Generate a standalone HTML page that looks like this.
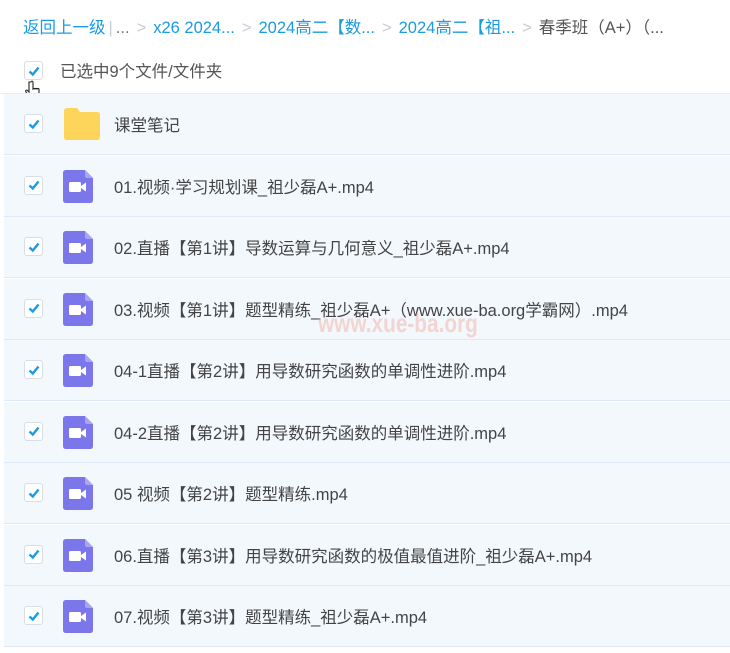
<!DOCTYPE html>
<html><head><meta charset="utf-8"><style>
body{margin:0;width:730px;height:653px;background:#fff;font-family:"Liberation Sans","Noto Sans CJK SC",sans-serif;overflow:hidden;position:relative}
.bc{position:absolute;left:23px;top:14px;font-size:16.5px;color:#1a9be6;white-space:nowrap}
.bc .g{color:#c6ccd6;margin:0 7px}
.bc .d{color:#555}
.cb{position:absolute;width:17px;height:17px;border:1px solid #d8dde6;border-radius:3px;background:#fff}
.cb svg{position:absolute;left:1.5px;top:1.5px}
.sel{position:absolute;left:60px;top:58px;font-size:16.5px;color:#555}
.row{position:absolute;left:4px;width:726px;height:60px;background:#f3f8fd;border-bottom:1.5px solid #dde9f6}
.row .cb{left:20px;top:20px}
.row .t{position:absolute;left:110px;top:18px;font-size:16.5px;color:#444;white-space:nowrap}
.row .ic{position:absolute;left:59px;top:14px}
.wm{position:absolute;left:318px;top:308px;font-size:26px;font-weight:bold;color:rgba(240,150,130,0.35);transform:scaleX(0.8);transform-origin:left top;font-family:"Liberation Sans",sans-serif}
</style></head><body>
<div class="bc">返回上一级<span class="g" style="margin:0 3px">|</span><span style="color:#777">...</span><span class="g">&gt;</span>x26 2024...<span class="g">&gt;</span>2024高二【数...<span class="g">&gt;</span>2024高二【祖...<span class="g">&gt;</span><span class="d">春季班（A+）（...</span></div>
<div class="cb" style="left:24px;top:61px"><svg width="14" height="14"><path d="M2.5 7.5 L5.8 10.5 L11.5 3.5" stroke="#1a9be6" stroke-width="2.4" fill="none"/></svg></div>
<div class="sel">已选中9个文件/文件夹</div>
<svg style="position:absolute;left:23px;top:80px" width="20" height="24"><path d="M6 2 v10 l-2 -2 q-2 0 -1 2 l4 7 h7 l2 -4 v-6 q-1 -1 -2 0 q-1 -1 -2 0 q-1 -1 -2 0 v-7 q-1 -2 -2 0z" fill="#fff" stroke="#222" stroke-width="1.1"/></svg>
<div style="position:absolute;left:0;top:93px;width:730px;height:1px;background:#e6edf5"></div>

<div class="row" style="top:94px"><div class="cb"><svg width="14" height="14"><path d="M2.5 7.5 L5.8 10.5 L11.5 3.5" stroke="#1a9be6" stroke-width="2.4" fill="none"/></svg></div>
<svg class="ic" width="36" height="32" style="left:60px;top:14px"><path d="M0 3 q0-3 3-3 h10 l3 4 h17 q3 0 3 3 v22 q0 3-3 3 h-30 q-3 0-3-3z" fill="#fdd55a"/></svg>
<div class="t">课堂笔记</div></div>

<div class="row" style="top:155.5px"><div class="cb"><svg width="14" height="14"><path d="M2.5 7.5 L5.8 10.5 L11.5 3.5" stroke="#1a9be6" stroke-width="2.4" fill="none"/></svg></div><svg class="ic" width="30" height="33"><path d="M3 0 h19 l8 8 v22 q0 3-3 3 h-24 q-3 0-3-3 v-27 q0-3 3-3z" fill="#7b76ea"/><path d="M22 0 v6 q0 2 2 2 h6z" fill="#a9a5f3"/><rect x="6" y="12" width="12" height="10" rx="1.5" fill="#fff"/><path d="M18 16 l5-3.5 v9 l-5-3.5z" fill="#fff"/></svg><div class="t">01.视频·学习规划课_祖少磊A+.mp4</div></div>

<div class="row" style="top:217px"><div class="cb"><svg width="14" height="14"><path d="M2.5 7.5 L5.8 10.5 L11.5 3.5" stroke="#1a9be6" stroke-width="2.4" fill="none"/></svg></div><svg class="ic" width="30" height="33"><path d="M3 0 h19 l8 8 v22 q0 3-3 3 h-24 q-3 0-3-3 v-27 q0-3 3-3z" fill="#7b76ea"/><path d="M22 0 v6 q0 2 2 2 h6z" fill="#a9a5f3"/><rect x="6" y="12" width="12" height="10" rx="1.5" fill="#fff"/><path d="M18 16 l5-3.5 v9 l-5-3.5z" fill="#fff"/></svg><div class="t">02.直播【第1讲】导数运算与几何意义_祖少磊A+.mp4</div></div>

<div class="row" style="top:278.5px"><div class="cb"><svg width="14" height="14"><path d="M2.5 7.5 L5.8 10.5 L11.5 3.5" stroke="#1a9be6" stroke-width="2.4" fill="none"/></svg></div><svg class="ic" width="30" height="33"><path d="M3 0 h19 l8 8 v22 q0 3-3 3 h-24 q-3 0-3-3 v-27 q0-3 3-3z" fill="#7b76ea"/><path d="M22 0 v6 q0 2 2 2 h6z" fill="#a9a5f3"/><rect x="6" y="12" width="12" height="10" rx="1.5" fill="#fff"/><path d="M18 16 l5-3.5 v9 l-5-3.5z" fill="#fff"/></svg><div class="t">03.视频【第1讲】题型精练_祖少磊A+（www.xue-ba.org学霸网）.mp4</div></div>

<div class="row" style="top:340px"><div class="cb"><svg width="14" height="14"><path d="M2.5 7.5 L5.8 10.5 L11.5 3.5" stroke="#1a9be6" stroke-width="2.4" fill="none"/></svg></div><svg class="ic" width="30" height="33"><path d="M3 0 h19 l8 8 v22 q0 3-3 3 h-24 q-3 0-3-3 v-27 q0-3 3-3z" fill="#7b76ea"/><path d="M22 0 v6 q0 2 2 2 h6z" fill="#a9a5f3"/><rect x="6" y="12" width="12" height="10" rx="1.5" fill="#fff"/><path d="M18 16 l5-3.5 v9 l-5-3.5z" fill="#fff"/></svg><div class="t">04-1直播【第2讲】用导数研究函数的单调性进阶.mp4</div></div>

<div class="row" style="top:401.5px"><div class="cb"><svg width="14" height="14"><path d="M2.5 7.5 L5.8 10.5 L11.5 3.5" stroke="#1a9be6" stroke-width="2.4" fill="none"/></svg></div><svg class="ic" width="30" height="33"><path d="M3 0 h19 l8 8 v22 q0 3-3 3 h-24 q-3 0-3-3 v-27 q0-3 3-3z" fill="#7b76ea"/><path d="M22 0 v6 q0 2 2 2 h6z" fill="#a9a5f3"/><rect x="6" y="12" width="12" height="10" rx="1.5" fill="#fff"/><path d="M18 16 l5-3.5 v9 l-5-3.5z" fill="#fff"/></svg><div class="t">04-2直播【第2讲】用导数研究函数的单调性进阶.mp4</div></div>

<div class="row" style="top:463px"><div class="cb"><svg width="14" height="14"><path d="M2.5 7.5 L5.8 10.5 L11.5 3.5" stroke="#1a9be6" stroke-width="2.4" fill="none"/></svg></div><svg class="ic" width="30" height="33"><path d="M3 0 h19 l8 8 v22 q0 3-3 3 h-24 q-3 0-3-3 v-27 q0-3 3-3z" fill="#7b76ea"/><path d="M22 0 v6 q0 2 2 2 h6z" fill="#a9a5f3"/><rect x="6" y="12" width="12" height="10" rx="1.5" fill="#fff"/><path d="M18 16 l5-3.5 v9 l-5-3.5z" fill="#fff"/></svg><div class="t">05 视频【第2讲】题型精练.mp4</div></div>

<div class="row" style="top:524.5px"><div class="cb"><svg width="14" height="14"><path d="M2.5 7.5 L5.8 10.5 L11.5 3.5" stroke="#1a9be6" stroke-width="2.4" fill="none"/></svg></div><svg class="ic" width="30" height="33"><path d="M3 0 h19 l8 8 v22 q0 3-3 3 h-24 q-3 0-3-3 v-27 q0-3 3-3z" fill="#7b76ea"/><path d="M22 0 v6 q0 2 2 2 h6z" fill="#a9a5f3"/><rect x="6" y="12" width="12" height="10" rx="1.5" fill="#fff"/><path d="M18 16 l5-3.5 v9 l-5-3.5z" fill="#fff"/></svg><div class="t">06.直播【第3讲】用导数研究函数的极值最值进阶_祖少磊A+.mp4</div></div>

<div class="row" style="top:586px"><div class="cb"><svg width="14" height="14"><path d="M2.5 7.5 L5.8 10.5 L11.5 3.5" stroke="#1a9be6" stroke-width="2.4" fill="none"/></svg></div><svg class="ic" width="30" height="33"><path d="M3 0 h19 l8 8 v22 q0 3-3 3 h-24 q-3 0-3-3 v-27 q0-3 3-3z" fill="#7b76ea"/><path d="M22 0 v6 q0 2 2 2 h6z" fill="#a9a5f3"/><rect x="6" y="12" width="12" height="10" rx="1.5" fill="#fff"/><path d="M18 16 l5-3.5 v9 l-5-3.5z" fill="#fff"/></svg><div class="t">07.视频【第3讲】题型精练_祖少磊A+.mp4</div></div>

<div class="wm">www.xue-ba.org</div>
</body></html>
